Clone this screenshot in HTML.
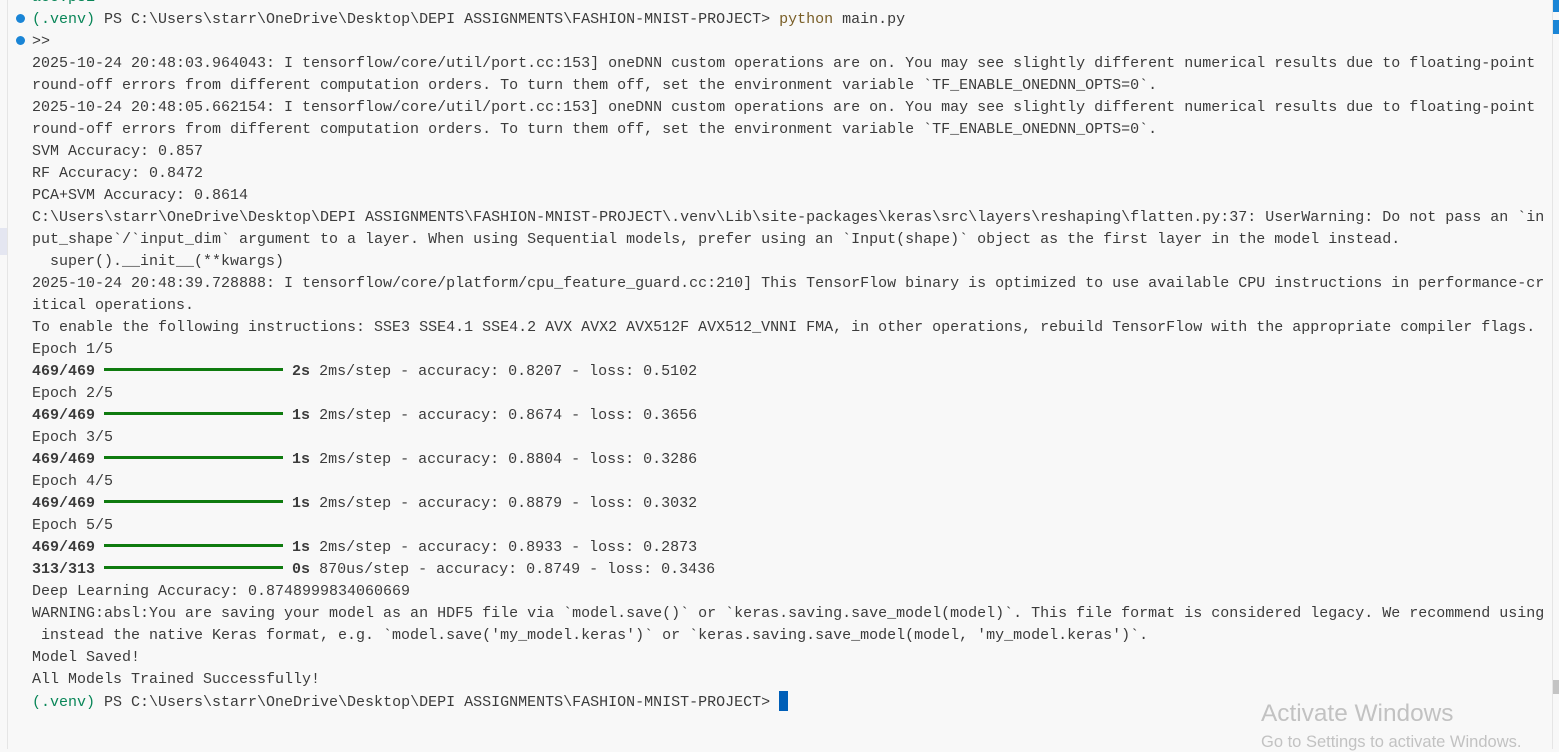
<!DOCTYPE html>
<html><head><meta charset="utf-8"><style>
html,body{margin:0;padding:0}
body{width:1559px;height:749px;background:#f8f8f8;position:relative;overflow:hidden;font-family:"Liberation Mono",monospace;font-size:15px;color:#3b3b3b}
#t{position:absolute;left:32px;top:-13px;line-height:22px;white-space:pre}
.b{font-weight:bold}
.g{color:#098658}
.bar{display:inline-block;width:179px;height:3px;background:#0f7b0f;vertical-align:middle;margin-bottom:3px}
.dot{position:absolute;left:16px;width:9px;height:9px;border-radius:50%;background:#1a85d6}
.lb{position:absolute;left:7px;top:0;width:1px;height:749px;background:#e5e5e5}
.sb{position:absolute;left:1552px;top:0;width:1px;height:749px;background:#e5e5e5}
.cur{display:inline-block;width:9px;height:20px;background:#005fb8;vertical-align:-5px}
.aw{position:absolute;left:1261px;top:700px;font-family:"Liberation Sans",sans-serif;color:#c2c2c2;font-size:24.4px;white-space:nowrap}
.aw2{position:absolute;left:1261px;top:733px;font-family:"Liberation Sans",sans-serif;color:#c2c2c2;font-size:16.5px;white-space:nowrap}
</style></head><body>
<div class="lb"></div>
<div style="position:absolute;left:0;top:228px;width:7px;height:27px;background:#e4e6f1"></div>
<div class="sb"></div>
<div style="position:absolute;left:1553px;top:0;width:6px;height:12px;background:#1a85d6"></div>
<div style="position:absolute;left:1553px;top:20px;width:6px;height:14px;background:#1a85d6"></div>
<div style="position:absolute;left:1553px;top:680px;width:6px;height:14px;background:#c4c4c4"></div>
<div class="dot" style="top:14px"></div>
<div class="dot" style="top:36px"></div>
<div id="t"><span class="g">acc.ps1</span>
<span class="g">(.venv)</span> PS C:\Users\starr\OneDrive\Desktop\DEPI ASSIGNMENTS\FASHION-MNIST-PROJECT&gt; <span style="color:#795e26">python</span> main.py
&gt;&gt;
2025-10-24 20:48:03.964043: I tensorflow/core/util/port.cc:153] oneDNN custom operations are on. You may see slightly different numerical results due to floating-point
round-off errors from different computation orders. To turn them off, set the environment variable `TF_ENABLE_ONEDNN_OPTS=0`.
2025-10-24 20:48:05.662154: I tensorflow/core/util/port.cc:153] oneDNN custom operations are on. You may see slightly different numerical results due to floating-point
round-off errors from different computation orders. To turn them off, set the environment variable `TF_ENABLE_ONEDNN_OPTS=0`.
SVM Accuracy: 0.857
RF Accuracy: 0.8472
PCA+SVM Accuracy: 0.8614
C:\Users\starr\OneDrive\Desktop\DEPI ASSIGNMENTS\FASHION-MNIST-PROJECT\.venv\Lib\site-packages\keras\src\layers\reshaping\flatten.py:37: UserWarning: Do not pass an `in
put_shape`/`input_dim` argument to a layer. When using Sequential models, prefer using an `Input(shape)` object as the first layer in the model instead.
  super().__init__(**kwargs)
2025-10-24 20:48:39.728888: I tensorflow/core/platform/cpu_feature_guard.cc:210] This TensorFlow binary is optimized to use available CPU instructions in performance-cr
itical operations.
To enable the following instructions: SSE3 SSE4.1 SSE4.2 AVX AVX2 AVX512F AVX512_VNNI FMA, in other operations, rebuild TensorFlow with the appropriate compiler flags.
Epoch 1/5
<span class="b">469/469</span> <span class="bar"></span> <span class="b">2s</span> 2ms/step - accuracy: 0.8207 - loss: 0.5102
Epoch 2/5
<span class="b">469/469</span> <span class="bar"></span> <span class="b">1s</span> 2ms/step - accuracy: 0.8674 - loss: 0.3656
Epoch 3/5
<span class="b">469/469</span> <span class="bar"></span> <span class="b">1s</span> 2ms/step - accuracy: 0.8804 - loss: 0.3286
Epoch 4/5
<span class="b">469/469</span> <span class="bar"></span> <span class="b">1s</span> 2ms/step - accuracy: 0.8879 - loss: 0.3032
Epoch 5/5
<span class="b">469/469</span> <span class="bar"></span> <span class="b">1s</span> 2ms/step - accuracy: 0.8933 - loss: 0.2873
<span class="b">313/313</span> <span class="bar"></span> <span class="b">0s</span> 870us/step - accuracy: 0.8749 - loss: 0.3436
Deep Learning Accuracy: 0.8748999834060669
WARNING:absl:You are saving your model as an HDF5 file via `model.save()` or `keras.saving.save_model(model)`. This file format is considered legacy. We recommend using
 instead the native Keras format, e.g. `model.save('my_model.keras')` or `keras.saving.save_model(model, 'my_model.keras')`.
Model Saved!
All Models Trained Successfully!
<span class="g">(.venv)</span> PS C:\Users\starr\OneDrive\Desktop\DEPI ASSIGNMENTS\FASHION-MNIST-PROJECT&gt; <span class="cur"></span></div>
<div class="aw">Activate Windows</div>
<div class="aw2">Go to Settings to activate Windows.</div>
</body></html>
